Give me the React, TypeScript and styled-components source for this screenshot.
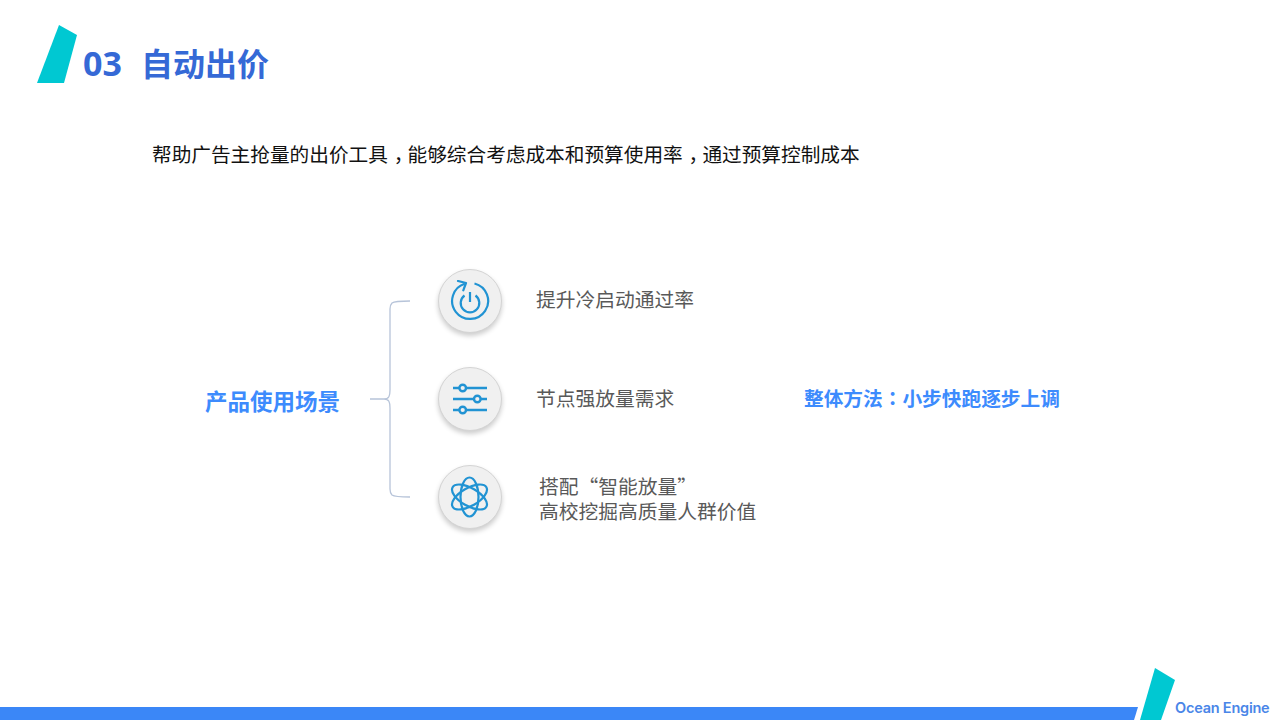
import styled, { createGlobalStyle } from "styled-components";

const GlobalStyle = createGlobalStyle`
  html, body {
    margin: 0;
    padding: 0;
    background: #fff;
  }
`;

const Slide = styled.div`
  width: 1280px;
  height: 720px;
  display: flex;
  flex-direction: column;
  overflow: hidden;
  background: #fff;
  font-family: "Noto Sans CJK SC", "Noto Sans", sans-serif;
`;

const Header = styled.header`
  display: flex;
  align-items: flex-end;
  height: 58px;
  margin-top: 25px;
  padding-left: 37px;
`;

const Title = styled.h1`
  display: flex;
  align-items: baseline;
  margin: 0 0 1px 6px;
  font-size: 32px;
  line-height: 38px;
  font-weight: 700;
  color: #3569d6;
`;

const TitleNumber = styled.span`
  font-family: "Open Sans", sans-serif;
  font-size: 34px;
  width: 58px;
`;

const Lead = styled.p`
  margin: 56px 0 0 152px;
  font-size: 19.67px;
  line-height: 30px;
  color: #111;
`;

// the reference's comma stays on the baseline but is centred in its cell
const Comma = styled.span`
  display: inline-block;
  box-sizing: border-box;
  width: 1em;
  padding-left: 0.3em;
  font-feature-settings: "halt";
`;

const Colon = styled.span`
  font-family: "Noto Sans CJK TC", sans-serif;
`;

const Usage = styled.section`
  display: grid;
  grid-template-columns: 165px 68px 98px 268px auto;
  align-items: center;
  width: 1075px;
  margin: 100px 0 0 205px;
`;

const UsageLabel = styled.div`
  font-size: 22.5px;
  line-height: 30px;
  font-weight: 700;
  color: #3d8bfd;
  margin-top: 1px;
`;

const Points = styled.ul`
  grid-column: 3 / 5;
  display: flex;
  flex-direction: column;
  gap: 34px;
  margin: 0;
  padding: 0;
  list-style: none;
`;

const Point = styled.li`
  display: flex;
  align-items: center;
  height: 64px;
`;

const IconCircle = styled.div`
  flex: none;
  width: 62px;
  height: 62px;
  border-radius: 50%;
  display: flex;
  align-items: center;
  justify-content: center;
  background: #f0f0f0;
  border: 1px solid #d4d4d4;
  box-shadow: 0 3px 5px rgba(0, 0, 0, 0.2);
`;

const PointText = styled.div<{ $indent?: number; $shift: number }>`
  margin-left: ${(props) => props.$indent ?? 34}px;
  padding-bottom: ${(props) => Math.max(-props.$shift, 0) * 2}px;
  padding-top: ${(props) => Math.max(props.$shift, 0) * 2}px;
  font-size: 19.75px;
  line-height: 25px;
  color: #595959;
`;

const Method = styled.div`
  font-size: 19.7px;
  line-height: 30px;
  font-weight: 700;
  color: #3d8bfd;
  margin-bottom: 2px;
`;

const Footer = styled.footer`
  margin-top: auto;
  height: 52px;
  display: flex;
  align-items: flex-end;
`;

const Bar = styled.div`
  width: 1138px;
  height: 13px;
  background: #3b87f7;
  clip-path: polygon(0 0, 100% 0, 99.65% 100%, 0 100%);
`;

const FooterMark = styled.svg`
  flex: none;
  margin-left: 2px;
`;

const Brand = styled.div`
  margin: 0 0 3px -1px;
  font-family: "Inter", sans-serif;
  font-size: 14.5px;
  line-height: 18px;
  font-weight: 600;
  letter-spacing: -0.22px;
  color: #4a86e8;
`;

const Mark = () => (
  <svg width="40" height="58" viewBox="0 0 40 58">
    <polygon points="22,0 40,10 27,58 0,58" fill="#00c8d2" />
  </svg>
);

const Brace = () => (
  <svg width="40" height="198" viewBox="0 0 40 198" fill="none">
    <path
      d="M40 1 C30 1 24 1.5 22 3 C20.500 4.500 20 6 20 9 L20 90 C20 96 19 99 14 99 L0 99 M14 99 C19 99 20 102 20 108 L20 189 C20 192 20.500 193.500 22 195 C24 196.500 30 197 40 197"
      stroke="#b7c4d9"
      strokeWidth="1.300"
    />
  </svg>
);

const PowerIcon = () => (
  <svg width="40" height="42" viewBox="0 0 40 42" fill="none" stroke="#2193d3" strokeWidth="2.200">
    <path d="M24.500 3.500 A18 18 0 1 1 14.700 3.800" />
    <path d="M8 1 L16 3 L13.300 10.300" strokeLinejoin="round" strokeLinecap="round" />
    <path d="M14.500 15.500 A9.300 9.300 0 1 0 25.500 15.500" />
    <path d="M20 12 L20 22" />
  </svg>
);

const SlidersIcon = () => (
  <svg width="38" height="34" viewBox="0 0 38 34" fill="none" stroke="#2193d3" strokeWidth="2.400">
    <path d="M2 6 L8.400 6 M15 6 L36 6" />
    <circle cx="11.700" cy="6" r="3.300" />
    <path d="M2 17 L23 17 M29.600 17 L36 17" />
    <circle cx="26.300" cy="17" r="3.300" />
    <path d="M2 28 L8.400 28 M15 28 L36 28" />
    <circle cx="11.700" cy="28" r="3.300" />
  </svg>
);

const AtomIcon = () => (
  <svg width="44" height="44" viewBox="0 0 44 44" fill="none" stroke="#2193d3" strokeWidth="2.200">
    <ellipse cx="21.500" cy="22" rx="9" ry="19.500" />
    <ellipse cx="21.500" cy="22" rx="9" ry="19.500" transform="rotate(60 21.500 22)" />
    <ellipse cx="21.500" cy="22" rx="9" ry="19.500" transform="rotate(-60 21.500 22)" />
  </svg>
);

const App = () => {
  return (
    <Slide>
      <GlobalStyle />
      <Header>
        <Mark />
        <Title>
          <TitleNumber>03</TitleNumber>
          <span>自动出价</span>
        </Title>
      </Header>
      <Lead>
        帮助广告主抢量的出价工具<Comma>，</Comma>能够综合考虑成本和预算使用率<Comma>，</Comma>通过预算控制成本
      </Lead>
      <Usage>
        <UsageLabel>产品使用场景</UsageLabel>
        <Brace />
        <Points>
          <Point>
            <IconCircle>
              <PowerIcon />
            </IconCircle>
            <PointText $shift={-3}>提升冷启动通过率</PointText>
          </Point>
          <Point>
            <IconCircle>
              <SlidersIcon />
            </IconCircle>
            <PointText $shift={-2}>节点强放量需求</PointText>
          </Point>
          <Point>
            <IconCircle>
              <AtomIcon />
            </IconCircle>
            <PointText $indent={37} $shift={1}>
              搭配“智能放量”
              <br />
              高校挖掘高质量人群价值
            </PointText>
          </Point>
        </Points>
        <Method>
          整体方法<Colon>：</Colon>小步快跑逐步上调
        </Method>
      </Usage>
      <Footer>
        <Bar />
        <FooterMark width="36" height="52" viewBox="0 0 36 52">
          <polygon points="15,0 35,12 21,52 0,52" fill="#00c8d2" />
        </FooterMark>
        <Brand>Ocean Engine</Brand>
      </Footer>
    </Slide>
  );
};

export default App;
